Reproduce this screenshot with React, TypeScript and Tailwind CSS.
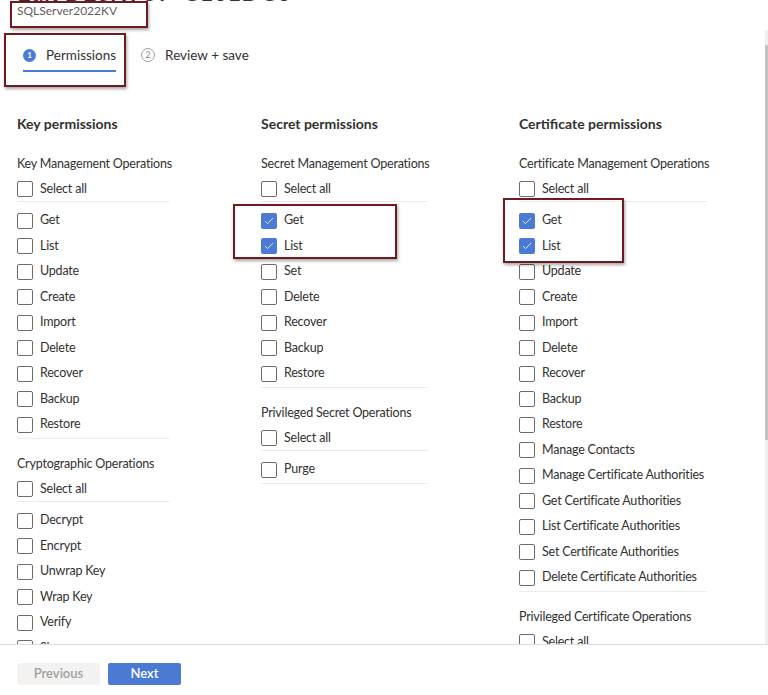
import type { ReactNode } from "react";

type Group = { label: string; items: string[]; checked?: string[] };
type Column = { title: string; width: string; rule: string; groups: Group[] };

const COLUMNS: Column[] = [
  {
    title: "Key permissions",
    width: "w-[244px]",
    rule: "w-[153px]",
    groups: [
      {
        label: "Key Management Operations",
        items: ["Get", "List", "Update", "Create", "Import", "Delete", "Recover", "Backup", "Restore"],
      },
      {
        label: "Cryptographic Operations",
        items: ["Decrypt", "Encrypt", "Unwrap Key", "Wrap Key", "Verify", "Sign"],
      },
    ],
  },
  {
    title: "Secret permissions",
    width: "w-[258px]",
    rule: "w-[167px]",
    groups: [
      {
        label: "Secret Management Operations",
        items: ["Get", "List", "Set", "Delete", "Recover", "Backup", "Restore"],
        checked: ["Get", "List"],
      },
      { label: "Privileged Secret Operations", items: ["Purge"] },
    ],
  },
  {
    title: "Certificate permissions",
    width: "w-[230px]",
    rule: "w-[188px]",
    groups: [
      {
        label: "Certificate Management Operations",
        items: [
          "Get",
          "List",
          "Update",
          "Create",
          "Import",
          "Delete",
          "Recover",
          "Backup",
          "Restore",
          "Manage Contacts",
          "Manage Certificate Authorities",
          "Get Certificate Authorities",
          "List Certificate Authorities",
          "Set Certificate Authorities",
          "Delete Certificate Authorities",
        ],
        checked: ["Get", "List"],
      },
      { label: "Privileged Certificate Operations", items: ["Purge"] },
    ],
  },
];

function Box({ checked }: { checked?: boolean }) {
  if (checked) {
    return (
      <span className="flex h-4 w-4 shrink-0 items-center justify-center rounded-[2px] bg-[#4a7ad4]">
        <svg viewBox="0 0 16 16" className="h-3 w-3" fill="none" stroke="white" strokeWidth={1.1}>
          <path d="M3 8.5l3 3 7-7" strokeLinecap="round" strokeLinejoin="round" />
        </svg>
      </span>
    );
  }
  return <span className="h-4 w-4 shrink-0 rounded-[2px] border border-[#6e6c6a] bg-white" />;
}

function Row({ label, checked, className = "h-[25.5px]" }: { label: string; checked?: boolean; className?: string }) {
  return (
    <div className={`flex items-center gap-[7px] ${className}`}>
      <Box checked={checked} />
      <span className="whitespace-nowrap text-[12.5px] tracking-[-0.2px] text-[#323130]">{label}</span>
    </div>
  );
}

function Annot({ className }: { className: string }) {
  return (
    <div
      className={`pointer-events-none absolute border-2 border-[#6d1a20] shadow-[1px_2px_3px_rgba(0,0,0,0.35)] ${className}`}
    />
  );
}

function PermissionColumn({ col }: { col: Column }) {
  return (
    <div className={`${col.width} shrink-0`}>
      <h2 className="flex h-5 items-center whitespace-nowrap text-[14px] font-bold text-[#323130]">{col.title}</h2>
      <div className="mt-[18.5px]">
        {col.groups.map((g, i) => (
          <div key={g.label} className={i > 0 ? "mt-[13px]" : ""}>
            <div className="flex h-[25.5px] items-center whitespace-nowrap text-[12.5px] tracking-[-0.2px] text-[#323130]">
              {g.label}
            </div>
            <div className={`${col.rule} border-b border-[#edebe9]`}>
              <Row label="Select all" className="h-6" />
            </div>
            <div className={`${col.rule} border-b border-[#edebe9] pt-[6px]`}>
              {g.items.map((it) => (
                <Row key={it} label={it} checked={g.checked?.includes(it)} />
              ))}
            </div>
          </div>
        ))}
      </div>
    </div>
  );
}

function Step({ n, active, children }: { n: number; active?: boolean; children: ReactNode }) {
  return (
    <div className="flex flex-col">
      <div className="flex h-6 items-center gap-[10px]">
        <span
          className={
            active
              ? "flex h-[13px] w-[13px] items-center justify-center rounded-full bg-[#4a7ad4] text-[8px] font-bold text-white"
              : "flex h-[14px] w-[14px] items-center justify-center rounded-full border border-[#a19f9d] text-[9px] text-[#8a8886]"
          }
        >
          {n}
        </span>
        <span className="whitespace-nowrap text-[13.5px] text-[#323130]">{children}</span>
      </div>
      <div className={`mt-[3px] h-[2px] ${active ? "bg-[#4a7ad4]" : "bg-transparent"}`} />
    </div>
  );
}

export default function App() {
  return (
    <div
      className="relative h-[695px] w-[768px] overflow-hidden bg-white"
      style={{ fontFamily: 'Lato, "Open Sans", sans-serif' }}
    >
      <div className="h-[644px] overflow-hidden px-[17px]">
        <h1 className="-mt-[21px] h-[25px] text-[24px] leading-[26px] font-semibold text-[#323130]">
          Edit DESKTOP-G101DG0
        </h1>
        <div className="flex h-[14px] items-center text-[12px] text-[#605e5c]">SQLServer2022KV</div>
        <div className="mt-[25px] flex gap-[25px] pl-[6px]">
          <Step n={1} active>
            Permissions
          </Step>
          <Step n={2}>Review + save</Step>
        </div>
        <div className="mt-[41px] flex">
          {COLUMNS.map((c) => (
            <PermissionColumn key={c.title} col={c} />
          ))}
        </div>
      </div>

      <div className="flex h-[51px] items-center gap-2 border-t border-[#e1dfdd] px-[17px] pt-[8px]">
        <button className="h-[22px] w-[83px] rounded-[2px] bg-[#f3f2f1] text-[13px] font-semibold text-[#a19f9d]">
          Previous
        </button>
        <button className="h-[22px] w-[73px] rounded-[2px] bg-[#4a7ad4] text-[13px] font-semibold text-white">
          Next
        </button>
      </div>

      {/* scrollbar */}
      <div className="absolute right-0 top-[30px] h-[614px] w-[3px] bg-[#f0f0f0]">
        <div className="mt-[15px] h-[395px] w-full bg-[#c2c2c2]" />
      </div>

      {/* annotation boxes */}
      <Annot className="left-[10px] top-[1px] h-[27px] w-[138px]" />
      <Annot className="left-[4px] top-[33px] h-[54px] w-[122px]" />
      <Annot className="left-[233px] top-[204px] h-[55px] w-[164px]" />
      <Annot className="left-[503px] top-[198px] h-[65px] w-[121px]" />
    </div>
  );
}
